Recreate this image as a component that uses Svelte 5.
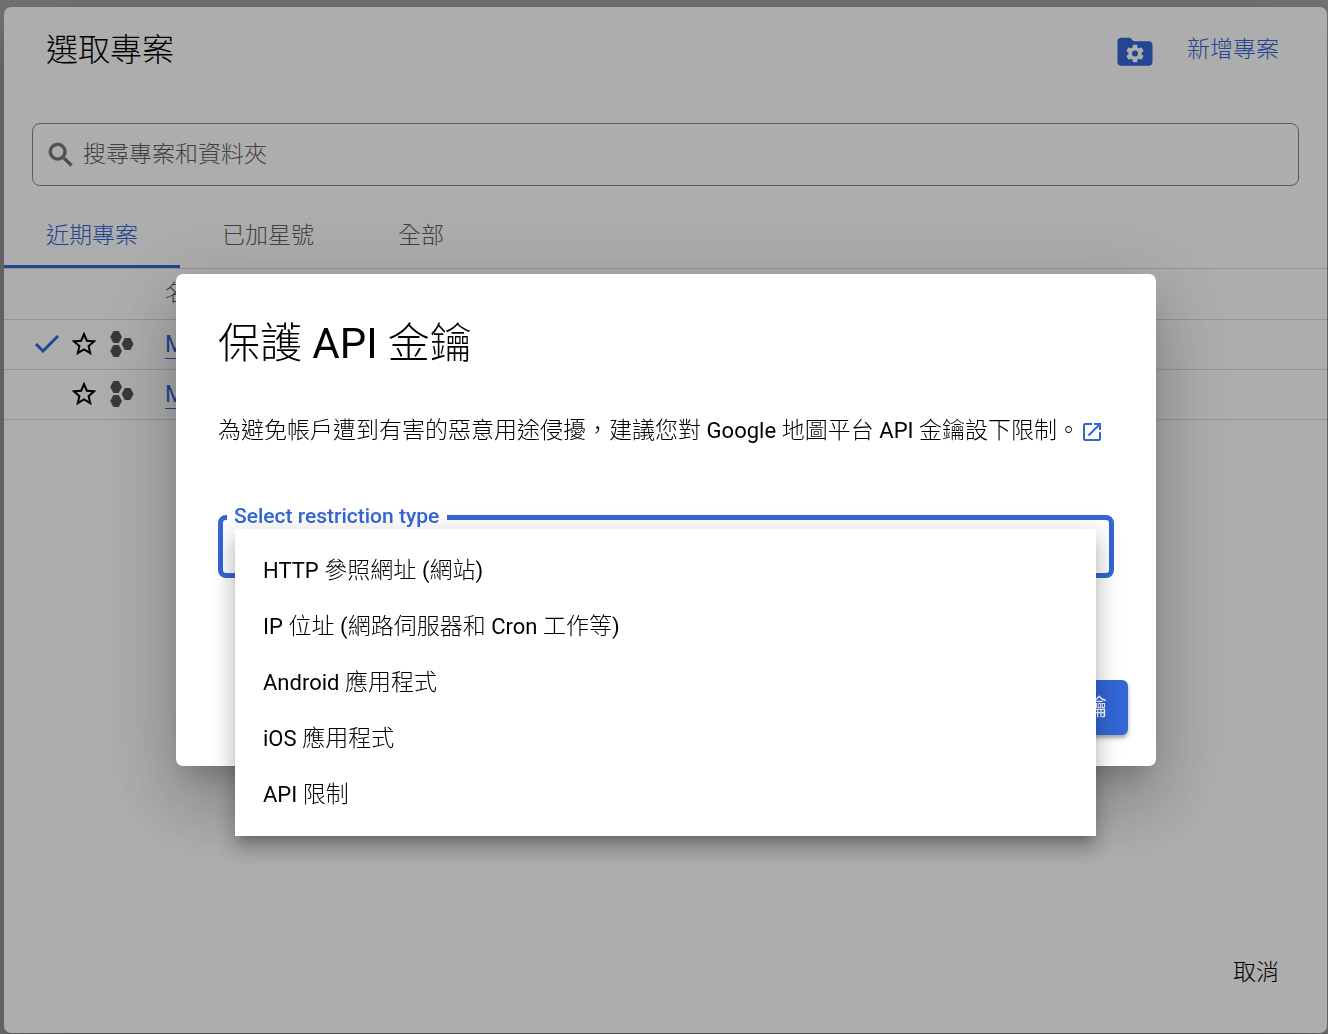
<script lang="ts">
  const tabs = ['近期專案', '已加星號', '全部'];
  const projects = [
    { name: 'Maps', current: true },
    { name: 'Main', current: false },
  ];
  const options = [
    'HTTP 參照網址 (網站)',
    'IP 位址 (網路伺服器和 Cron 工作等)',
    'Android 應用程式',
    'iOS 應用程式',
    'API 限制',
  ];
  const title = '保護 API 金鑰';
  const message = '為避免帳戶遭到有害的惡意用途侵擾，建議您對 Google 地圖平台 API 金鑰設下限制。';
  let activeTab = $state(0);
  let restriction = $state('');

  // Latin runs are set in a heavier weight than the light Chinese text.
  const runs = (text: string) =>
    text.split(/([A-Za-z()]+)/).filter(Boolean).map((part) => ({ part, latin: /^[A-Za-z()]/.test(part) }));
</script>

{#snippet mixed(text: string)}{#each runs(text) as run}{#if run.latin}<span class="latin">{run.part}</span>{:else}{run.part}{/if}{/each}{/snippet}

<div class="page">
  <section class="picker" aria-label="選取專案">
    <header class="picker-head">
      <h1>選取專案</h1>
      <div class="head-actions">
        <button class="icon-button" aria-label="管理資源">
          <svg width="42" height="42" viewBox="0 -1 24 24" fill="currentColor">
            <path d="M4 4h5.200l2 2H20c1.100 0 2 .9 2 2v10c0 1.100-.9 2-2 2H4c-1.100 0-2-.9-2-2V6c0-1.100.9-2 2-2z" />
            <path fill="#fff" transform="translate(6 7) scale(.5)" d="M19.430 12.980c.04-.32.07-.64.07-.98s-.03-.66-.07-.98l2.110-1.650c.19-.15.24-.42.12-.64l-2-3.460c-.12-.22-.39-.3-.61-.22l-2.490 1c-.52-.4-1.080-.73-1.690-.98l-.38-2.650C14.460 2.180 14.250 2 14 2h-4c-.25 0-.46.18-.49.42l-.38 2.650c-.61.25-1.170.59-1.690.98l-2.490-1c-.23-.09-.49 0-.61.22l-2 3.460c-.13.22-.07.49.12.64l2.110 1.650c-.04.32-.07.65-.07.98s.03.66.07.98l-2.110 1.650c-.19.15-.24.42-.12.64l2 3.460c.12.22.39.3.61.22l2.490-1c.52.4 1.080.73 1.690.98l.38 2.650c.03.24.24.42.49.42h4c.25 0 .46-.18.49-.42l.38-2.650c.61-.25 1.170-.59 1.690-.98l2.490 1c.23.09.49 0 .61-.22l2-3.460c.12-.22.07-.49-.12-.64l-2.110-1.650zM12 15.500a3.500 3.500 0 1 1 0-7 3.500 3.500 0 0 1 0 7z" />
          </svg>
        </button>
        <button class="text-button primary">新增專案</button>
      </div>
    </header>

    <div class="search">
      <svg width="32" height="32" viewBox="0 0 24 24" fill="currentColor" stroke="currentColor" stroke-width=".6" aria-hidden="true">
        <path d="M15.500 14h-.79l-.28-.27A6.470 6.470 0 0 0 16 9.500 6.500 6.500 0 1 0 9.500 16c1.610 0 3.090-.59 4.230-1.570l.27.28v.79l5 4.990L20.490 19l-4.990-5zm-6 0C7.010 14 5 11.990 5 9.500S7.010 5 9.500 5 14 7.010 14 9.500 11.990 14 9.500 14z" />
      </svg>
      <input type="text" placeholder="搜尋專案和資料夾" aria-label="搜尋專案和資料夾" />
    </div>

    <div class="tabs" role="tablist">
      {#each tabs as tab, i}
        <button role="tab" aria-selected={activeTab === i} class:active={activeTab === i} onclick={() => (activeTab = i)}>{tab}</button>
      {/each}
    </div>

    <table>
      <thead>
        <tr><th class="marks"></th><th>名稱</th></tr>
      </thead>
      <tbody>
        {#each projects as project}
          <tr>
            <td class="marks">
              <div class="mark-row">
                <span class="check">
                  {#if project.current}
                    <svg width="24" height="18" viewBox="0 0 24 18" fill="none" stroke="currentColor" stroke-width="3" aria-hidden="true">
                      <path d="M1 9l7 7L23 1" />
                    </svg>
                  {/if}
                </span>
                <button class="star" aria-label="加上星號">
                  <svg width="30" height="30" viewBox="0 0 24 24" fill="currentColor">
                    <path d="M22 9.240l-7.190-.62L12 2 9.190 8.630 2 9.240l5.460 4.730L5.820 21 12 17.270 18.180 21l-1.630-7.030L22 9.240zM12 15.400l-3.760 2.270 1-4.280-3.320-2.880 4.380-.38L12 6.100l1.710 4.040 4.380.38-3.320 2.880 1 4.280L12 15.400z" />
                  </svg>
                </button>
                <svg class="hex" width="24" height="26" viewBox="0 0 24 26" fill="currentColor" aria-hidden="true">
                  <path d="M3.400 0h5.400l3.200 6-3.200 6H3.400L.2 6zM3.400 14h5.400l3.200 6-3.200 6H3.400L.2 20zM14.800 7h5.600l3.200 6-3.200 6h-5.600l-3.200-6z" />
                </svg>
              </div>
            </td>
            <td><a href="#project">{project.name}</a></td>
          </tr>
        {/each}
      </tbody>
    </table>

    <footer class="picker-foot">
      <button class="text-button">取消</button>
    </footer>
  </section>

  <div class="scrim">
    <div class="modal" role="dialog" aria-modal="true" aria-labelledby="modal-title">
      <h2 id="modal-title">{@render mixed(title)}</h2>
      <p class="message">
        {@render mixed(message)}<a class="external" href="#docs" aria-label="瞭解詳情"><svg width="24" height="24" viewBox="0 0 24 24" fill="currentColor"><path d="M19 19H5V5h7V3H5a2 2 0 0 0-2 2v14a2 2 0 0 0 2 2h14c1.100 0 2-.9 2-2v-7h-2v7zM14 3v2h3.590l-9.830 9.830 1.410 1.410L19 6.410V10h2V3h-7z" /></svg></a>
      </p>
      <div class="field">
        <fieldset>
          <legend><label for="restriction">Select restriction type</label></legend>
          <select id="restriction" bind:value={restriction}>
            <option value=""></option>
            {#each options as option}
              <option>{option}</option>
            {/each}
          </select>
        </fieldset>
        <ul class="menu" role="listbox" aria-label="Select restriction type">
          {#each options as option}
            <li role="option" aria-selected={restriction === option}>{@render mixed(option)}</li>
          {/each}
        </ul>
      </div>
      <div class="modal-actions">
        <button class="filled">限制金鑰</button>
      </div>
    </div>
  </div>
</div>

<style>
  :global(body) {
    margin: 0;
    background: #adadad;
  }
  .page {
    --blue: #3367d6;
    --shadow: 0 19px 26px -12px rgba(0, 0, 0, 0.2), 0 42px 66px 5px rgba(0, 0, 0, 0.14), 0 16px 80px 14px rgba(0, 0, 0, 0.12);
    box-sizing: border-box;
    min-height: 100vh;
    padding: 7px 1px 1px 4px;
    display: flex;
    overflow: hidden;
    font: 300 23px/28px Roboto, 'Noto Sans CJK TC', sans-serif;
    color: #000;
  }
  button,
  input,
  select {
    font: inherit;
    color: inherit;
    border: 0;
    background: none;
    padding: 0;
    margin: 0;
  }
  svg {
    display: block;
  }
  .latin {
    font-weight: 400;
  }
  .message .latin,
  .menu .latin {
    font-size: 22px;
  }
  .picker {
    flex: 1;
    display: flex;
    flex-direction: column;
    background: #fff;
    border-radius: 7px;
    box-shadow: var(--shadow);
  }
  .picker-head {
    display: flex;
    justify-content: space-between;
    align-items: center;
    height: 86px;
    padding: 0 48px 0 42px;
  }
  h1 {
    margin: 0;
    font-size: 32px;
    line-height: 40px;
    font-weight: 300;
  }
  .head-actions {
    display: flex;
    align-items: center;
    gap: 31px;
  }
  .icon-button,
  .primary {
    color: var(--blue);
  }
  .search {
    display: flex;
    align-items: center;
    gap: 6px;
    margin: 30px 28px 0;
    padding: 0 12px;
    height: 61px;
    border: 1px solid #80868b;
    border-radius: 8px;
    color: #757575;
  }
  .search input {
    flex: 1;
    outline: 0;
  }
  .search input::placeholder {
    color: #616161;
    opacity: 1;
  }
  .tabs {
    display: flex;
    margin-top: 17px;
    border-bottom: 1px solid #dadce0;
  }
  .tabs button {
    height: 65px;
    padding: 3px 42px 0;
    border-bottom: 3px solid transparent;
    color: #616161;
  }
  .tabs .active {
    color: var(--blue);
    border-color: var(--blue);
  }
  table {
    border-collapse: collapse;
    width: 100%;
  }
  th,
  td {
    height: 49px;
    padding: 0;
    border-bottom: 1px solid #dadce0;
    text-align: left;
    font-weight: 300;
    color: #616161;
  }
  th {
    height: 50px;
  }
  .marks {
    width: 161px;
  }
  .mark-row {
    display: flex;
    align-items: center;
    padding: 0 0 2px 31px;
  }
  .check {
    width: 34px;
    color: var(--blue);
  }
  .star {
    color: #000;
    margin-right: 11px;
  }
  .hex {
    color: #555;
  }
  td a {
    color: var(--blue);
    font-weight: 400;
    text-decoration: none;
    border-bottom: 1px solid var(--blue);
  }
  .picker-foot {
    display: flex;
    justify-content: flex-end;
    margin-top: auto;
    padding: 0 48px 46px;
  }
  .scrim {
    position: fixed;
    inset: 0;
    box-sizing: border-box;
    display: flex;
    align-items: center;
    justify-content: center;
    padding: 6px 0 0 4px;
    background: rgba(0, 0, 0, 0.32);
  }
  .modal {
    box-sizing: border-box;
    width: 980px;
    max-width: 92vw;
    padding: 42px 28px 31px 42px;
    background: #fff;
    border-radius: 7px;
    box-shadow: var(--shadow);
  }
  h2 {
    margin: 0;
    font-size: 42px;
    line-height: 56px;
    font-weight: 300;
  }
  p {
    margin: 43px 0 0;
    line-height: 32px;
    white-space: nowrap;
  }
  .external {
    display: inline-block;
    vertical-align: middle;
    color: var(--blue);
  }
  .field {
    position: relative;
    margin: 55px 14px 0 0;
  }
  fieldset {
    box-sizing: border-box;
    margin: 0;
    padding: 0 10px;
    height: 76px;
    border: 5px solid var(--blue);
    border-radius: 8px;
    min-width: 0;
  }
  legend {
    margin-left: -6px;
    padding: 0 8px 2px 7px;
    color: var(--blue);
    font-size: 21px;
    line-height: 28px;
    font-weight: 500;
  }
  select {
    appearance: none;
    width: 100%;
    outline: 0;
  }
  .menu {
    position: absolute;
    z-index: 1;
    top: 27px;
    left: 17px;
    right: 18px;
    margin: 0;
    padding: 14px 0 13px;
    list-style: none;
    background: #fff;
    box-shadow: 0 9px 9px -5px rgba(0, 0, 0, 0.2), 0 14px 18px 2px rgba(0, 0, 0, 0.14), 0 5px 25px 4px rgba(0, 0, 0, 0.12);
  }
  .menu li {
    padding: 0 28px;
    line-height: 56px;
  }
  .modal-actions {
    display: flex;
    justify-content: flex-end;
    margin-top: 102px;
  }
  .filled {
    height: 55px;
    padding: 0 21px;
    border-radius: 6px;
    background: var(--blue);
    color: #fff;
    font-weight: 400;
    box-shadow: 0 3px 4px rgba(0, 0, 0, 0.35);
  }
</style>
